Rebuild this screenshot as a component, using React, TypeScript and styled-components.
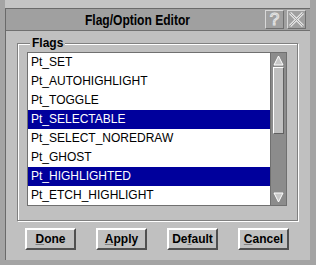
import React from 'react';
import styled, { createGlobalStyle } from 'styled-components';

const Global = createGlobalStyle`
  html, body { margin: 0; padding: 0; background: #c0c0c0; }
  body { font-family: "Liberation Sans", Arial, sans-serif; }
  * { box-sizing: border-box; }
`;

const Window = styled.div`
  width: 316px;
  height: 265px;
  background: #a4a4a4;
  padding: 0 6px 5px 5px;
  display: flex;
  flex-direction: column;
`;

const TopStrip = styled.div`
  height: 8px;
  background: #c4c4c4;
`;

const Frame = styled.div`
  flex: 1;
  display: flex;
  flex-direction: column;
  border-top: 1px solid #6a6a6a;
  border-left: 1px solid #6a6a6a;
`;

const TitleBar = styled.div`
  height: 22px;
  background: #a0a0a0;
  border-bottom: 1px solid #707070;
  display: flex;
  align-items: center;
  padding-right: 4px;
`;

const Title = styled.div`
  flex: 1;
  text-align: center;
  font-weight: bold;
  font-size: 14px;
  color: #000;
  transform: scaleX(0.86);
  padding-left: 8px;
`;

const TitleButton = styled.div`
  width: 19px;
  height: 19px;
  margin-left: 3px;
  border: 1px solid #d8d8d8;
  border-right-color: #707070;
  border-bottom-color: #707070;
  display: flex;
  align-items: center;
  justify-content: center;
`;

const HelpGlyph = styled.span`
  font-family: "Liberation Sans", Arial, sans-serif;
  font-size: 17px;
  color: #a0a0a0;
  -webkit-text-stroke: 1px #e4e4e4;
  line-height: 1;
`;

const Body = styled.div`
  flex: 1;
  background: #c0c0c0;
  display: flex;
  flex-direction: column;
  padding: 12px 12px 0 11px;
`;

const Group = styled.div`
  position: relative;
  height: 178px;
  border: 1px solid #808080;
  box-shadow: inset 1px 1px 0 #ffffff, 1px 1px 0 #ffffff;
  padding: 8px 9px 0 9px;
`;

const GroupLabel = styled.span`
  position: absolute;
  top: -8px;
  left: 12px;
  padding: 0 2px;
  background: #c0c0c0;
  font-weight: bold;
  font-size: 12px;
  line-height: 14px;
  color: #000;
`;

const ListWrap = styled.div`
  display: flex;
  height: 154px;
`;

const ListBox = styled.div`
  width: 243px;
  background: #ffffff;
  border: 1px solid #707070;
  border-right: none;
  display: flex;
  flex-direction: column;
`;

const Row = styled.div<{ $sel?: boolean }>`
  height: 19px;
  line-height: 19px;
  padding-left: 3px;
  font-size: 12px;
  color: ${p => (p.$sel ? '#ffffff' : '#000000')};
  background: ${p => (p.$sel ? '#00009c' : 'transparent')};
  white-space: nowrap;
`;

const ScrollBar = styled.div`
  width: 17px;
  background: #8c8c8c;
  border: 1px solid #707070;
  display: flex;
  flex-direction: column;
  align-items: center;
  padding: 1px 2px;
`;

const Arrow = styled.div`
  height: 13px;
  width: 100%;
  display: flex;
  align-items: center;
  justify-content: center;
`;

const Thumb = styled.div`
  width: 100%;
  height: 67px;
  background: #c0c0c0;
  border: 1px solid #ffffff;
  border-right-color: #606060;
  border-bottom-color: #606060;
`;

const Spacer = styled.div`
  flex: 1;
`;

const ButtonRow = styled.div`
  display: flex;
  gap: 20px;
  padding-left: 8px;
  margin-top: 7px;
`;

const Button = styled.div`
  width: 51px;
  height: 22px;
  background: #c0c0c0;
  border: 2px solid;
  border-color: #ffffff #505050 #505050 #ffffff;
  display: flex;
  align-items: center;
  justify-content: center;
  font-weight: bold;
  font-size: 12px;
  color: #000;
  u { text-decoration-color: #808080; }
`;

const rows = [
  'Pt_SET',
  'Pt_AUTOHIGHLIGHT',
  'Pt_TOGGLE',
  'Pt_SELECTABLE',
  'Pt_SELECT_NOREDRAW',
  'Pt_GHOST',
  'Pt_HIGHLIGHTED',
  'Pt_ETCH_HIGHLIGHT',
];
const selected = new Set(['Pt_SELECTABLE', 'Pt_HIGHLIGHTED']);

export default function App() {
  return (
    <>
      <Global />
      <Window>
        <TopStrip />
        <Frame>
          <TitleBar>
            <Title>Flag/Option Editor</Title>
            <TitleButton>
              <HelpGlyph>?</HelpGlyph>
            </TitleButton>
            <TitleButton>
              <svg width="15" height="15" viewBox="0 0 15 15">
                <path d="M1 1 L14 14 M14 1 L1 14" stroke="#e4e4e4" strokeWidth="3" />
                <path d="M1 1 L14 14 M14 1 L1 14" stroke="#a0a0a0" strokeWidth="1" />
              </svg>
            </TitleButton>
          </TitleBar>
          <Body>
            <Group>
              <GroupLabel>Flags</GroupLabel>
              <ListWrap>
                <ListBox>
                  {rows.map(r => (
                    <Row key={r} $sel={selected.has(r)}>{r}</Row>
                  ))}
                </ListBox>
                <ScrollBar>
                  <Arrow>
                    <svg width="11" height="11" viewBox="0 0 11 11">
                      <path d="M5.5 1 L10 10 L1 10 Z" fill="#c8c8c8" stroke="#ffffff" strokeWidth="1" />
                    </svg>
                  </Arrow>
                  <Thumb />
                  <Spacer />
                  <Arrow>
                    <svg width="11" height="11" viewBox="0 0 11 11">
                      <path d="M1 1 L10 1 L5.5 10 Z" fill="#c8c8c8" stroke="#ffffff" strokeWidth="1" />
                    </svg>
                  </Arrow>
                </ScrollBar>
              </ListWrap>
            </Group>
            <ButtonRow>
              <Button><u>D</u>one</Button>
              <Button><u>A</u>pply</Button>
              <Button>De<u>f</u>ault</Button>
              <Button><u>C</u>ancel</Button>
            </ButtonRow>
          </Body>
        </Frame>
      </Window>
    </>
  );
}
